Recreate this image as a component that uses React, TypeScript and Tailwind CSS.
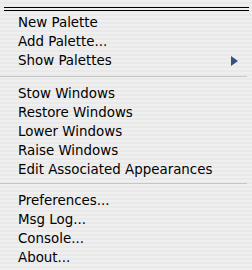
const groups: string[][] = [
  ["New Palette", "Add Palette...", "Show Palettes"],
  ["Stow Windows", "Restore Windows", "Lower Windows", "Raise Windows", "Edit Associated Appearances"],
  ["Preferences...", "Msg Log...", "Console...", "About..."],
];

function Item({ label }: { label: string }) {
  return (
    <div className="flex h-[19px] items-center justify-between pl-[18px] pr-[14px] text-[13.4px] leading-[19px] text-black">
      <span>{label}</span>
      {label === "Show Palettes" && (
        <svg width="7" height="10" viewBox="0 0 7 10">
          <path d="M0 0 L7 5 L0 10 Z" fill="#35507e" />
        </svg>
      )}
    </div>
  );
}

function Separator({ top, h }: { top: string; h: string }) {
  return (
    <div className={`${h} ${top}`}>
      <div className="h-px w-[247px] bg-[#c6c6c6]" />
    </div>
  );
}

export default function App() {
  return (
    <div
      className="flex w-[252px] h-[270px] flex-col overflow-hidden bg-[repeating-linear-gradient(180deg,#efefef_0px,#efefef_2px,#e9e9e9_2px,#e9e9e9_4px)]"
      style={{ fontFamily: '"DejaVu Sans", "Liberation Sans", sans-serif' }}
    >
      <div className="flex h-[13px] flex-col gap-[2px] pt-[7px] pl-[4px] pr-[3px]">
        <div className="h-px bg-black" />
        <div className="h-px bg-black" />
      </div>
      {groups.map((g, i) => (
        <div key={i} className="flex flex-col">
          {i === 1 && <Separator h="h-[14px]" top="pt-[6px]" />}
          {i === 2 && <Separator h="h-[12px]" top="pt-[4px]" />}
          {g.map((l) => (
            <Item key={l} label={l} />
          ))}
        </div>
      ))}
    </div>
  );
}
